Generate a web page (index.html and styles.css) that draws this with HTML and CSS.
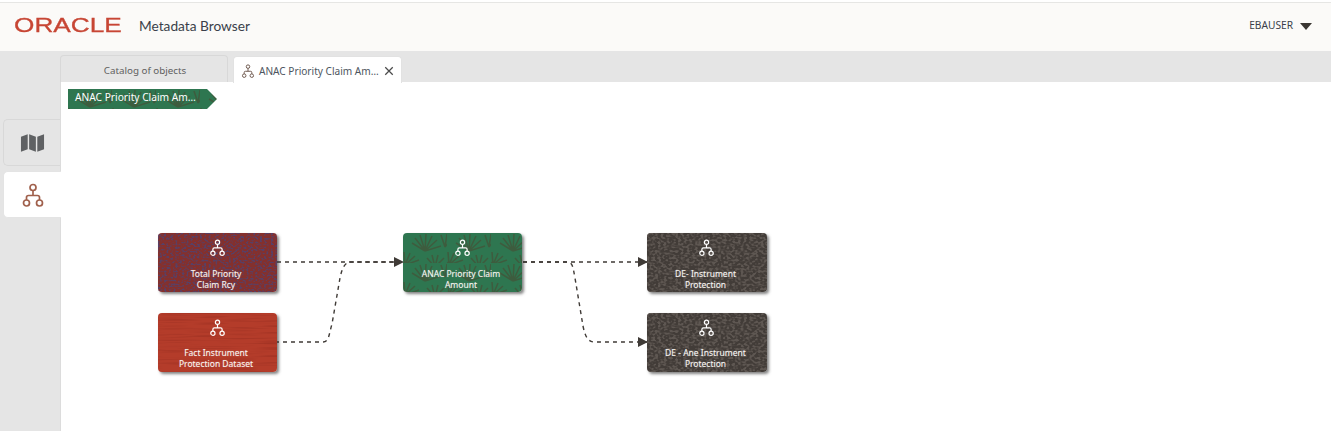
FILE: index.html
```html
<!DOCTYPE html>
<html lang="en">
<head>
<meta charset="utf-8">
<title>Metadata Browser</title>
<link rel="stylesheet" href="styles.css">
</head>
<body>
<svg class="defs" width="0" height="0" aria-hidden="true">
  <defs>
    <g id="lineage">
      <circle cx="12" cy="4.500" r="3" />
      <path d="M12 7.500V12.500M5.500 17V14.500Q5.500 12.500 7.500 12.500H16.500Q18.500 12.500 18.500 14.500V17" />
      <circle cx="5.500" cy="20" r="3" />
      <circle cx="18.500" cy="20" r="3" />
    </g>
    <filter id="tex-red" x="0" y="0" width="100%" height="100%" color-interpolation-filters="sRGB">
      <feTurbulence type="fractalNoise" baseFrequency="0.45 0.55" numOctaves="1" seed="3" />
      <feColorMatrix values="0 0 0 0 0.34  0 0 0 0 0.25  0 0 0 0 0.40  4 4 0 0 -3.900" />
    </filter>
    <filter id="tex-brick" x="0" y="0" width="100%" height="100%" color-interpolation-filters="sRGB">
      <feTurbulence type="fractalNoise" baseFrequency="0.03 0.6" numOctaves="1" seed="8" />
      <feColorMatrix values="0 0 0 0 0.64  0 0 0 0 0.20  0 0 0 0 0.14  2 2 0 0 -1.900" />
    </filter>
    <filter id="tex-stone" x="0" y="0" width="100%" height="100%" color-interpolation-filters="sRGB">
      <feTurbulence type="fractalNoise" baseFrequency="0.35 0.45" numOctaves="1" seed="5" />
      <feColorMatrix values="0 0 0 0 0.37  0 0 0 0 0.34  0 0 0 0 0.32  4 4 0 0 -3.700" />
    </filter>
    <pattern id="leaves" width="44" height="30" patternUnits="userSpaceOnUse">
      <rect width="44" height="30" fill="#2e7650" />
      <g class="leaf-lines">
        <path d="M22 18L9 10M22 18L12 5M22 18L17 2M22 18L23 1M22 18L29 3M22 18L34 7M22 18L38 13" />
        <path d="M2 32L-6 22M2 32L1 19M2 32L7 20M2 32L12 23M2 32L16 27" />
        <path d="M32 34L24 25M32 34L29 22M32 34L35 22M32 34L41 25M32 34L46 30" />
        <path d="M42 14L38 2M42 14L44 1M42 14L50 4" />
      </g>
    </pattern>
  </defs>
</svg>

<header class="topbar">
  <div class="brand">
    <span class="logo">ORACLE</span>
    <span class="app-title">Metadata Browser</span>
  </div>
  <div class="user">
    <span>EBAUSER</span>
    <span class="caret"></span>
  </div>
</header>

<div class="workspace">
  <div class="tabstrip">
    <div class="tab tab-plain">Catalog of objects</div>
    <div class="tab tab-active">
      <svg class="icon tab-icon" viewBox="0 0 24 24"><use href="#lineage" /></svg>
      <span class="tab-label">ANAC Priority Claim Am…</span>
      <svg class="close" viewBox="0 0 12 12"><path d="M1.500 1.500L10.500 10.500M10.500 1.500L1.500 10.500" /></svg>
    </div>
  </div>
  <div class="main">
    <nav class="siderail">
      <div class="side-btn">
        <svg class="map" viewBox="0 0 26 20"><path d="M1 3.500L8 1V16.500L1 19ZM9.500 1L16.500 3.500V19L9.500 16.500ZM18 3.500L25 1V16.500L18 19Z" /></svg>
      </div>
      <div class="side-btn side-active">
        <svg class="icon side-icon" viewBox="0 0 24 24"><use href="#lineage" /></svg>
      </div>
    </nav>
    <section class="canvas">
      <div class="crumb">
        <svg class="crumb-tex"><rect width="100%" height="100%" fill="url(#leaves)" /></svg>
        <span class="crumb-text">ANAC Priority Claim Am…</span>
      </div>

      <svg class="edges" width="800" height="340" viewBox="0 0 800 340">
        <defs>
          <marker id="arrow" markerWidth="10" markerHeight="10" refX="9" refY="5" orient="auto" markerUnits="userSpaceOnUse">
            <path d="M0 0L10 5L0 10Z" class="arrow-head" />
          </marker>
        </defs>
        <path d="M216 180H342" class="edge" marker-end="url(#arrow)" />
        <path d="M216 260H262C268 260 268 252 271 242L279 196C281 186 284 180 290 180H342" class="edge edge-b" />
        <path d="M462 180H586" class="edge" marker-end="url(#arrow)" />
        <path d="M462 180H506C512 180 512 186 514 196L522 244C524 254 527 260 533 260H586" class="edge" marker-end="url(#arrow)" />
      </svg>

      <article class="node node-a">
        <svg class="tex"><rect width="100%" height="100%" class="base-a" /><rect width="100%" height="100%" filter="url(#tex-red)" /></svg>
        <svg class="icon node-icon" viewBox="0 0 24 24"><use href="#lineage" /></svg>
        <p class="node-text">Total Priority<br>Claim Rcy</p>
      </article>
      <article class="node node-b">
        <svg class="tex"><rect width="100%" height="100%" class="base-b" /><rect width="100%" height="100%" filter="url(#tex-brick)" /></svg>
        <svg class="icon node-icon" viewBox="0 0 24 24"><use href="#lineage" /></svg>
        <p class="node-text">Fact Instrument<br>Protection Dataset</p>
      </article>
      <article class="node node-c">
        <svg class="tex"><rect width="100%" height="100%" fill="url(#leaves)" /></svg>
        <svg class="icon node-icon" viewBox="0 0 24 24"><use href="#lineage" /></svg>
        <p class="node-text">ANAC Priority Claim<br>Amount</p>
      </article>
      <article class="node node-d">
        <svg class="tex"><rect width="100%" height="100%" class="base-d" /><rect width="100%" height="100%" filter="url(#tex-stone)" /></svg>
        <svg class="icon node-icon" viewBox="0 0 24 24"><use href="#lineage" /></svg>
        <p class="node-text">DE- Instrument<br>Protection</p>
      </article>
      <article class="node node-e">
        <svg class="tex"><rect width="100%" height="100%" class="base-d" /><rect width="100%" height="100%" filter="url(#tex-stone)" /></svg>
        <svg class="icon node-icon" viewBox="0 0 24 24"><use href="#lineage" /></svg>
        <p class="node-text">DE - Ane Instrument<br>Protection</p>
      </article>
    </section>
  </div>
</div>
</body>
</html>
```

FILE: styles.css
```css
* { box-sizing: border-box; }
html, body { margin: 0; height: 435px; overflow: hidden; background: #fff; }
body { font-family: "Noto Sans", "Open Sans", sans-serif; color: #3a3632; display: flex; flex-direction: column; }
.defs { position: absolute; }

.topbar { margin-top: 2px; height: 49px; flex: none; display: flex; align-items: center; justify-content: space-between; background: #fbfaf8; border-top: 1px solid #e6e6e4; padding: 0 19px 4px 14px; }
.brand { display: flex; align-items: center; }
.logo { width: 107px; font-family: "Liberation Sans", sans-serif; font-size: 20px; line-height: 20px; color: #c74634; transform: scaleX(1.31); transform-origin: left center; -webkit-text-stroke: 0.3px #c74634; white-space: nowrap; }
.app-title { margin-left: 18px; font-family: Lato, "Noto Sans", sans-serif; font-size: 13.700px; color: #3a3f4a; }
.user { display: flex; align-items: center; gap: 7px; font-size: 10.200px; color: #3a3f4a; }
.caret { width: 0; height: 0; border-left: 6px solid transparent; border-right: 6px solid transparent; border-top: 7px solid #3a3632; margin-top: 2px; }

.workspace { flex: 1; display: flex; flex-direction: column; background: #e5e5e5; min-height: 0; margin-bottom: 4px; }
.tabstrip { height: 31px; flex: none; display: flex; align-items: flex-end; gap: 5px; padding-left: 60px; }
.tab { width: 168px; height: 27px; padding-top: 3px; display: flex; align-items: center; justify-content: center; background: #e5e5e5; border: 1px solid #d8d8d8; border-bottom: 0; border-radius: 4px 4px 0 0; font-size: 9.800px; color: #5f5f5f; }
.tab-plain { padding-left: 2px; }
.tab-active { width: 169px; padding-top: 2px; background: #fff; border-color: #e2e2e2; color: #4d5560; justify-content: flex-start; padding-left: 7px; position: relative; top: 1px; z-index: 1; }
.tab-icon { width: 14px; height: 14px; stroke: #6f5a50; }
.tab-label { margin-left: 4px; white-space: nowrap; font-size: 10.100px; }
.close { width: 10px; height: 10px; margin-left: 5px; fill: none; stroke: #4a4a4a; stroke-width: 1.500; }

.main { flex: 1; display: flex; min-height: 0; }
.siderail { width: 60px; flex: none; padding-top: 37px; display: flex; flex-direction: column; gap: 5px; }
.side-btn { margin-left: 3px; width: 57px; height: 47px; display: flex; align-items: center; justify-content: center; border: 1px solid #d8d8d8; border-right: 0; border-radius: 5px 0 0 5px; }
.side-active { width: 58px; flex: none; background: #fff; border-color: #e4e4e4; position: relative; z-index: 1; }
.map { width: 25px; height: 20px; fill: #5f6163; }
.side-icon { width: 24px; height: 24px; stroke: #a0604c; stroke-width: 1.800; }

.icon { fill: none; stroke-width: 1.700; flex: none; }
.canvas { flex: 1; position: relative; background: #fff; border-left: 1px solid #dcdcdc; overflow: hidden; }

.crumb { position: absolute; left: 7px; top: 7px; width: 149px; height: 20px; clip-path: polygon(0 0, 139px 0, 100% 50%, 139px 100%, 0 100%); }
.crumb-tex { position: absolute; inset: 0; width: 100%; height: 100%; }
.crumb-text { position: absolute; left: 7px; top: -1px; line-height: 18px; font-size: 10.200px; color: #fff; white-space: nowrap; }

.edges { position: absolute; left: 0; top: 0; }
.edge { fill: none; stroke: #3f3a36; stroke-width: 1.400; stroke-dasharray: 4 4; }
.edge-b { stroke-dashoffset: 2; }
.arrow-head { fill: #3f3a36; }
.leaf-lines { fill: none; stroke: #3d5c3e; stroke-width: 1.600; }

.node { position: absolute; width: 119px; height: 59px; border-radius: 4px; box-shadow: 2px 2px 3px rgba(50, 50, 50, .6); color: #fff; text-align: center; }
.tex { position: absolute; inset: 0; width: 100%; height: 100%; border-radius: 4px; }
.node-a { left: 97px; top: 151px; }
.node-b { left: 97px; top: 231px; }
.node-c { left: 342px; top: 151px; }
.node-d { left: 586px; top: 151px; width: 120px; }
.node-e { left: 586px; top: 231px; width: 120px; }
.base-a { fill: #84302d; }
.base-b { fill: #b43c2a; }
.base-d { fill: #423c38; }
.node-icon { position: absolute; left: 50%; top: 6px; width: 17px; height: 17px; margin-left: -9px; stroke: #fff; }
.node-text { position: absolute; left: 0; right: 3px; top: 36px; margin: 0; font-size: 8.500px; line-height: 10.500px; color: #f7f4f1; text-shadow: 0 0 1px rgba(255, 255, 255, .4); }
.node-b .node-text, .node-e .node-text { top: 35px; }
```
